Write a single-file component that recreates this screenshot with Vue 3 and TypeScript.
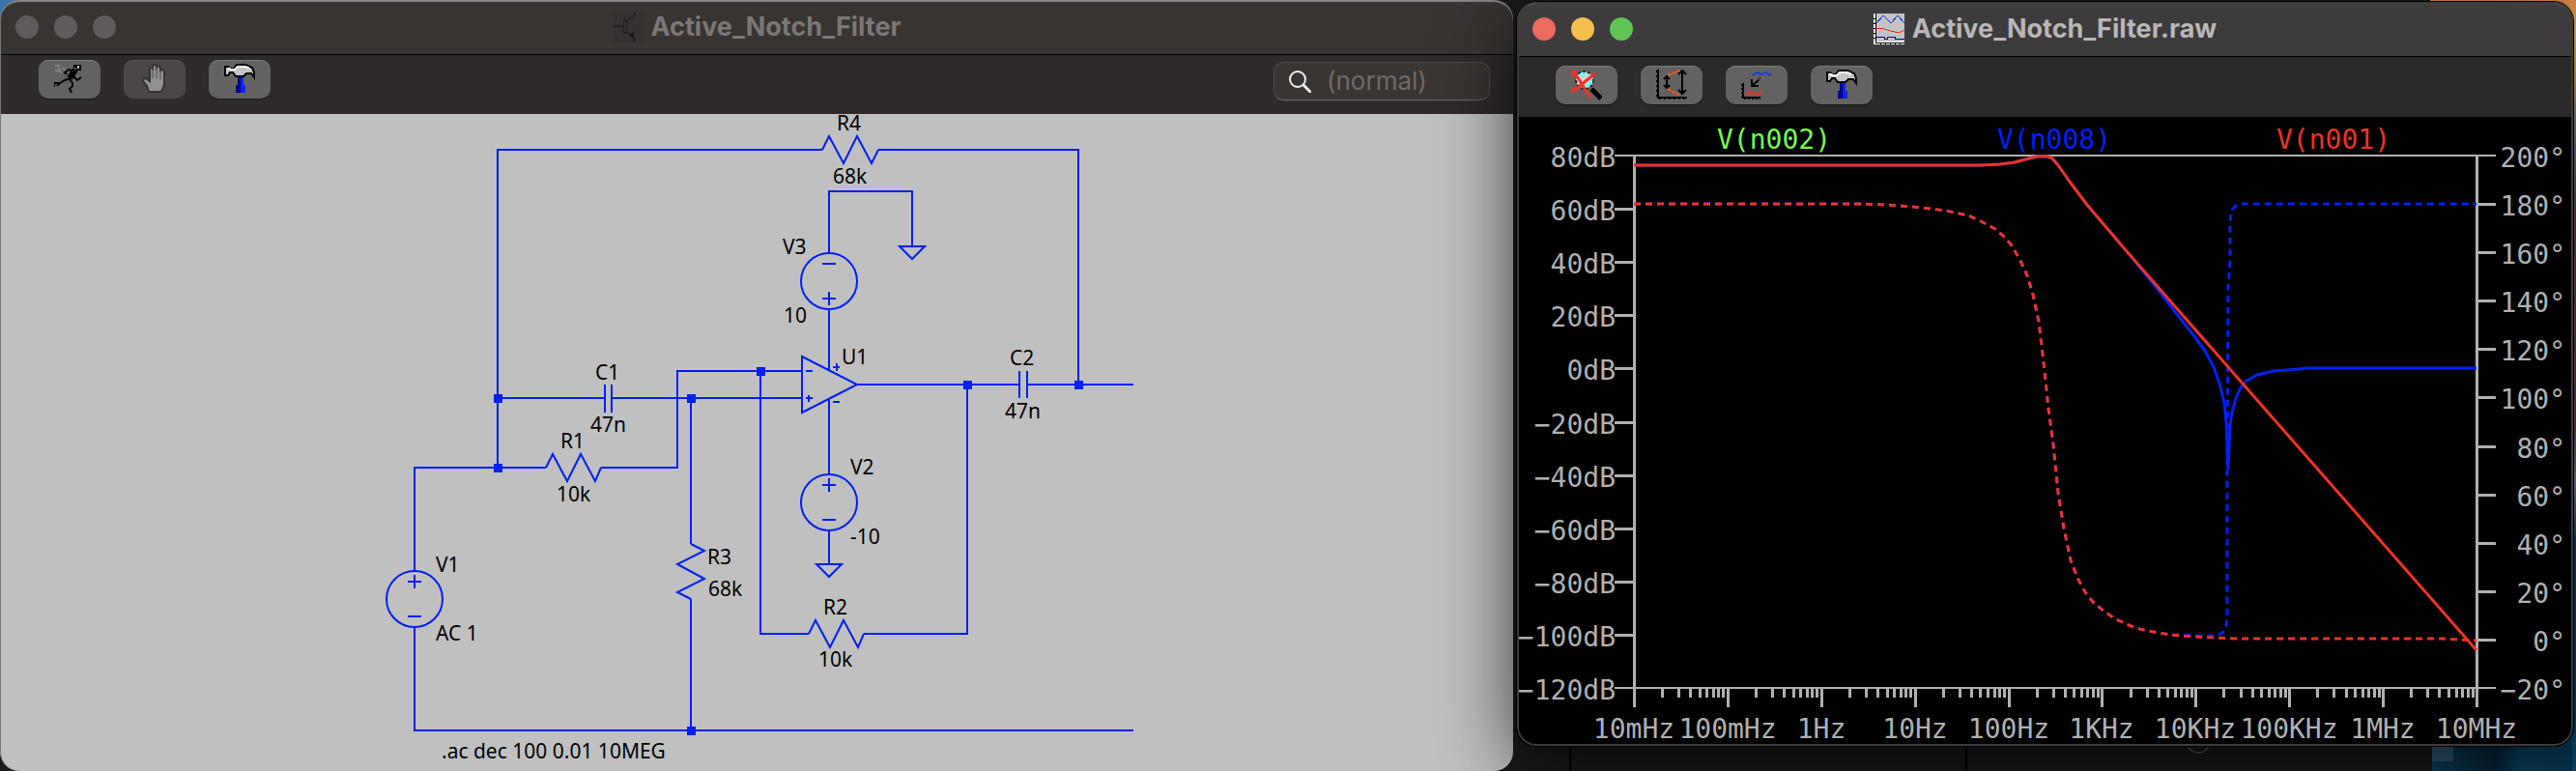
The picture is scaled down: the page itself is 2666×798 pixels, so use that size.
<script setup lang="ts">
type Point = [number, number]

interface Label {
  text: string
  x: number
  y: number
}

const labels: Label[] = [
  { text: 'R4', x: 866, y: 135 },
  { text: '68k', x: 862, y: 190 },
  { text: 'V3', x: 810, y: 263 },
  { text: '10', x: 811, y: 334 },
  { text: 'U1', x: 871, y: 377 },
  { text: 'C2', x: 1045, y: 378 },
  { text: '47n', x: 1040, y: 433 },
  { text: 'C1', x: 616, y: 393 },
  { text: '47n', x: 611, y: 447 },
  { text: 'R1', x: 580, y: 464 },
  { text: '10k', x: 576, y: 519 },
  { text: 'V1', x: 451, y: 592 },
  { text: 'AC 1', x: 451, y: 663 },
  { text: 'R3', x: 732, y: 584 },
  { text: '68k', x: 733, y: 617 },
  { text: 'V2', x: 880, y: 491 },
  { text: '-10', x: 880, y: 563 },
  { text: 'R2', x: 852, y: 636 },
  { text: '10k', x: 847, y: 690 },
  { text: '.ac dec 100 0.01 10MEG', x: 457, y: 785 },
]

const nodes: Point[] = [
  [515, 412], [515, 484], [715, 412], [715, 756], [787, 384], [1001, 398], [1116, 398],
]

const wires = [
  'M851 155H515V484',
  'M909 155H1116V398',
  'M515 412H626M633 412H830',
  'M429 591V484H565',
  'M622 484H701V384H830',
  'M715 412V563M715 620V756',
  'M429 649V756H1173',
  'M787 384V656H837',
  'M894 656H1001V398',
  'M887 398H1055M1063 398H1173',
  'M858 262V198H944V255',
  'M858 320V384M858 412V491M858 549V584',
].join('')

const parts = [
  'M851 155l7 -14 15 28 14 -28 15 28 7 -14',
  'M565 484l7 -14 15 28 14 -28 15 28 6 -14',
  'M837 656l7 -14 15 28 14 -28 15 28 6 -14',
  'M715 563l14 7 -28 14 28 15 -28 14 14 7',
  'M626 398V427M633 398V427',
  'M1055 384V412M1063 384V412',
  'M830 369V427L887 398Z',
  'M931 255H957L944 268Z',
  'M845 584H871L858 597Z',
  'M422 602H436M429 595V609M422 638H436',
  'M851 273H865M851 309H865M858 302V316',
  'M851 502H865M858 495V509M851 538H865',
  'M834 384H841M834 412H841M837 409V416',
  'M862 380H869M866 376V384M862 416H869',
].join('')

// Plot area edges
const left = 1691
const right = 2563
const top = 161
const bottom = 712

const dbTicks = Array.from({ length: 11 }, (_, i) => ({
  text: `${80 - i * 20}dB`.replace('-', '−'),
  y: Math.round(top + ((bottom - top) * i) / 10),
  edge: i === 0 || i === 10,
}))

const degTicks = Array.from({ length: 12 }, (_, i) => ({
  text: `${200 - i * 20}°`.replace('-', '−'),
  y: Math.round(top + ((bottom - top) * i) / 11),
  edge: i === 0 || i === 11,
}))

const decade = (right - left) / 9
const freqTicks = ['10mHz', '100mHz', '1Hz', '10Hz', '100Hz', '1KHz', '10KHz', '100KHz', '1MHz', '10MHz'].map(
  (text, i) => ({ text, x: Math.round(left + decade * i) }),
)
const minorTicks = Array.from({ length: 9 }, (_, d) =>
  [2, 3, 4, 5, 6, 7, 8, 9].map((n) => Math.round(left + decade * (d + Math.log10(n)))),
).flat()

const traces = [
  { text: 'V(n002)', x: 1836, cls: 'green' },
  { text: 'V(n008)', x: 2126, cls: 'blue' },
  { text: 'V(n001)', x: 2415, cls: 'red' },
]

const asPoints = (list: Point[]) => list.map((p) => p.join(',')).join(' ')

const gainShared: Point[] = [
  [1691, 171], [2048, 171], [2070, 170], [2085, 168], [2096, 165], [2108, 162], [2119, 162], [2124, 164],
  [2130, 171], [2142, 188], [2160, 212], [2200, 259],
]
const gainRed = asPoints([...gainShared, [2321, 397], [2563, 673]])
const gainBlue = asPoints([
  ...gainShared, [2218, 281], [2235, 302], [2252, 324], [2267, 343], [2282, 363], [2291, 380], [2297, 397],
  [2302, 417], [2304, 437], [2306, 485], [2308, 440], [2310, 427], [2314, 412], [2319, 401], [2325, 394],
  [2336, 388], [2353, 384], [2379, 382], [2388, 381], [2563, 381],
])

const phaseShared: Point[] = [
  [1691, 211], [1927, 211], [1953, 212], [1978, 214], [1998, 216], [2013, 218], [2037, 223], [2048, 228],
  [2065, 237], [2073, 244], [2082, 254], [2092, 272], [2098, 285], [2104, 305], [2110, 333], [2115, 375],
  [2120, 423], [2125, 460], [2130, 510], [2136, 547], [2143, 580], [2151, 600], [2158, 613], [2167, 624],
  [2178, 633], [2190, 641], [2210, 650], [2223, 653], [2246, 657],
]
const phaseRed = asPoints([...phaseShared, [2271, 659], [2313, 661], [2528, 661], [2563, 663]])
const phaseBlue = asPoints([
  ...phaseShared, [2271, 658], [2295, 658], [2301, 654], [2304, 648], [2305, 638], [2305, 480], [2306, 297],
  [2308, 270], [2308, 233], [2309, 218], [2314, 213], [2321, 211], [2563, 211],
])
</script>

<template>
  <main class="desktop">
    <section class="window schematic" aria-label="Schematic">
      <header class="titlebar">
        <div class="lights">
          <button type="button" aria-label="Close"></button>
          <button type="button" aria-label="Minimize"></button>
          <button type="button" aria-label="Zoom"></button>
        </div>
        <h1>
          <svg class="icon" viewBox="0 0 32 32" aria-hidden="true">
            <rect width="32" height="32" fill="#353130" />
            <path d="M0 15H11M15 10L23 3V0M15 21L23 28V31" fill="none" stroke="#161414" stroke-width="1" />
            <rect x="12" y="9" width="2" height="13" fill="#555" stroke="#111" />
            <path d="M17 25L22 21V28Z" fill="#161414" />
          </svg>
          <span>Active_Notch_Filter</span>
        </h1>
      </header>
      <div class="toolbar">
        <button type="button" class="tool" aria-label="Run">
          <svg class="icon" viewBox="0 0 32 32" aria-hidden="true">
            <g fill="none" stroke="#858282" stroke-width="2">
              <path d="M1 2H6M9 4L11 7M1 7H4L8 9M4 4L7 6" />
            </g>
            <path d="M20 1H28V7H23V4H20Z" fill="#000" />
            <rect x="24" y="2" width="2" height="3" fill="#bbb" />
            <path d="M22 6L16 15" stroke="#000" stroke-width="6" />
            <path
              d="M19 7L15 6L11 9L13 11M20 13L24 17L28 14M17 15L11 17L6 20H0V24M6 20L3 23M15 15L19 20V23L16 26L18 30"
              fill="none" stroke="#000" stroke-width="2"
            />
          </svg>
        </button>
        <button type="button" class="tool" aria-label="Halt" disabled>
          <svg class="icon" viewBox="0 0 32 32" aria-hidden="true">
            <path
              d="M10 29L8 23L4 18Q4 15 7 15L11 18V5Q12 3 14 5V2Q16 0 18 2V4Q20 1 22 4V7Q25 5 26 8V22L23 29Z"
              fill="#92908e" stroke="#363332" stroke-width="2"
            />
            <path d="M14 4V15M18 3V15M22 6V16" stroke="#4e4b4a" stroke-width="1" />
          </svg>
        </button>
        <button type="button" class="tool" aria-label="Control panel">
          <svg class="icon" viewBox="0 0 32 32" aria-hidden="true">
            <path d="M1 3H4L6 5H10L13 1H22L29 4L31 9V14L28 10H23L20 13H12L9 9H6L4 12H1Z" fill="#c4c4c4" stroke="#000" stroke-width="2" />
            <path d="M3 5H5L7 6H11L14 3H22L26 5" fill="none" stroke="#fff" stroke-width="2" />
            <path d="M14 14H17V22H18V30H12V22H14Z" fill="#00007e" />
            <path d="M17 14H20V22H22V30H17Z" fill="#0a20ff" />
          </svg>
        </button>
        <label class="search">
          <svg viewBox="0 0 24 24" aria-hidden="true">
            <circle cx="10" cy="10" r="8" fill="none" stroke="#eee" stroke-width="2" />
            <path d="M16 16L23 23" stroke="#eee" stroke-width="3" stroke-linecap="round" />
          </svg>
          <input type="text" placeholder="(normal)" aria-label="Simulation mode" />
        </label>
      </div>
      <svg class="canvas" viewBox="0 118 1566 680" role="img" aria-label="Active notch filter circuit">
        <g class="circuit">
          <path :d="wires" />
          <path :d="parts" />
          <circle cx="429" cy="620" r="29" />
          <circle cx="858" cy="291" r="29" />
          <circle cx="858" cy="520" r="29" />
        </g>
        <rect v-for="(n, i) in nodes" :key="i" :x="n[0] - 4" :y="n[1] - 4" width="9" height="9" fill="#0020f5" />
        <text v-for="(l, i) in labels" :key="i" :x="l.x" :y="l.y" class="part">{{ l.text }}</text>
      </svg>
    </section>

    <section class="window waveform" aria-label="Waveform">
      <header class="titlebar">
        <div class="lights">
          <button type="button" class="close" aria-label="Close"></button>
          <button type="button" class="min" aria-label="Minimize"></button>
          <button type="button" class="zoom" aria-label="Zoom"></button>
        </div>
        <h1>
          <svg class="icon" viewBox="0 0 32 32" shape-rendering="crispEdges" aria-hidden="true">
            <rect width="32" height="32" fill="#fff" />
            <rect x="3" width="29" height="29" fill="#c4c4c4" />
            <path d="M2 0V30M2 30H32" fill="none" stroke="#000" />
            <path d="M0 5H2M0 10H2M0 15H2M0 20H2M0 25H2M7 30V32M12 30V32M17 30V32M22 30V32M27 30V32" stroke="#000" />
            <path d="M3 10L10 2L18 10L25 2L32 10" fill="none" stroke="#1438e8" />
            <path d="M3 16L7 15L18 18L26 20L32 17" fill="none" stroke="#e83020" />
            <path d="M3 24H11V26H14V24H22V26H32" fill="none" stroke="#000c90" />
          </svg>
          <span>Active_Notch_Filter.raw</span>
        </h1>
      </header>
      <div class="toolbar">
        <button type="button" class="tool" aria-label="Zoom to fit">
          <svg class="icon" viewBox="0 0 32 32" aria-hidden="true">
            <path d="M21 20L31 30" stroke="#000" stroke-width="5" />
            <circle cx="14" cy="11" r="9" fill="#cfd4d4" stroke="#222" stroke-width="2" stroke-dasharray="3 2" />
            <path d="M9 6Q12 3 15 5M15 17Q20 16 21 11" fill="none" stroke="#6ff" stroke-width="3" />
            <path d="M1 2L8 10L14 20L20 29M25 4L15 12L8 18L1 23M1 8V2H7M1 18L3 24" fill="none" stroke="#ee3224" stroke-width="3" />
          </svg>
        </button>
        <button type="button" class="tool" aria-label="Autorange Y axis">
          <svg class="icon" viewBox="0 0 32 32" aria-hidden="true">
            <path d="M2 0V29H32" fill="none" stroke="#000" stroke-width="2" />
            <path d="M1 1V29M3 30H32" fill="none" stroke="#000" stroke-width="2" stroke-dasharray="2 3" />
            <path d="M12 6L26 0M12 20L25 27" stroke="#f05a28" stroke-width="2" stroke-dasharray="4 1" />
            <path d="M11 7V19M8 10L11 7L14 10M8 16L11 19L14 16M27 1V25M23 5L27 1L31 5M23 21L27 25L31 21" fill="none" stroke="#000" stroke-width="2" />
          </svg>
        </button>
        <button type="button" class="tool" aria-label="Add trace">
          <svg class="icon" viewBox="0 0 32 32" aria-hidden="true">
            <path d="M12 6L16 3L21 5L26 3L29 6L32 4" fill="none" stroke="#1c3cd8" stroke-width="2" />
            <path d="M20 8L17 12" stroke="#702020" stroke-width="2" />
            <path d="M18 11L12 16M11 10V17H18" fill="none" stroke="#000" stroke-width="2" />
            <path d="M2 14V29H20" fill="none" stroke="#000" stroke-width="2" />
            <path d="M1 15V29M3 30H20" fill="none" stroke="#000" stroke-width="2" stroke-dasharray="2 2" />
            <path d="M4 26L8 23L12 25L17 25L21 23" fill="none" stroke="#ee3224" stroke-width="2" />
          </svg>
        </button>
        <button type="button" class="tool" aria-label="Control panel">
          <svg class="icon" viewBox="0 0 32 32" aria-hidden="true">
            <path d="M1 3H4L6 5H10L13 1H22L29 4L31 9V14L28 10H23L20 13H12L9 9H6L4 12H1Z" fill="#c4c4c4" stroke="#000" stroke-width="2" />
            <path d="M3 5H5L7 6H11L14 3H22L26 5" fill="none" stroke="#fff" stroke-width="2" />
            <path d="M14 14H17V22H18V30H12V22H14Z" fill="#00007e" />
            <path d="M17 14H20V22H22V30H17Z" fill="#0a20ff" />
          </svg>
        </button>
      </div>
      <svg class="canvas" viewBox="1570 121 1093 651" role="img" aria-label="Frequency response plot">
        <g class="axis">
          <path :d="`M${left - 20} ${top}H${right + 20}M${left - 20} ${bottom}H${right + 20}`" stroke-width="2" />
          <path :d="`M${left} ${top}V${bottom + 20}M${right} ${top}V${bottom + 20}`" stroke-width="3" />
          <template v-for="t in dbTicks" :key="t.text">
            <path v-if="!t.edge" :d="`M${left - 20} ${t.y}H${left}`" stroke-width="3" />
          </template>
          <template v-for="t in degTicks" :key="t.text">
            <path v-if="!t.edge" :d="`M${right} ${t.y}H${right + 20}`" stroke-width="3" />
          </template>
          <path v-for="t in freqTicks" :key="t.text" :d="`M${t.x} ${bottom}v20`" stroke-width="3" />
          <path v-for="x in minorTicks" :key="x" :d="`M${x} ${bottom}v10`" stroke-width="3" />
        </g>
        <g class="trace">
          <polyline class="blue dashed" :points="phaseBlue" />
          <polyline class="blue" :points="gainBlue" />
          <polyline class="red dashed" :points="phaseRed" />
          <polyline class="red" :points="gainRed" />
        </g>
        <g class="tick end">
          <text v-for="t in dbTicks" :key="t.text" x="1672" :y="t.y + 12">{{ t.text }}</text>
          <text v-for="t in degTicks" :key="t.text" x="2655" :y="t.y + 12">{{ t.text }}</text>
        </g>
        <g class="tick mid">
          <text v-for="t in freqTicks" :key="t.text" :x="t.x" y="764">{{ t.text }}</text>
          <text v-for="t in traces" :key="t.text" :class="t.cls" :x="t.x" y="154">{{ t.text }}</text>
        </g>
      </svg>
    </section>
  </main>
</template>

<style>
body {
  background: #1a1818;
}
</style>

<style scoped>
.desktop {
  display: grid;
  grid-template-columns: 1566fr 1093fr;
  gap: 4px;
  align-items: start;
  min-height: 100vh;
  padding-right: 3px;
  box-sizing: border-box;
  overflow: hidden;
  font-family: Inter, "Liberation Sans", sans-serif;
  background:
    linear-gradient(#3b74ad, #3b74ad) 0 0 / 20px 20px no-repeat,
    linear-gradient(#e8884a, #f0b850) 100% 0 / 151px 30px no-repeat,
    linear-gradient(#f0bc4e 0 80px, #8c7f98 140px, #6e4256 220px, #6e4256 440px, #8c88a8 500px, #0b4a6e 560px) 100% 0 / 4px 100% no-repeat,
    linear-gradient(#33607c, #33607c) calc(100% - 127px) 768px / 22px 20px no-repeat,
    linear-gradient(90deg, #0d4768, #06263c 45%, #0d4768 60%, #083550) 100% 760px / 149px 40px no-repeat,
    linear-gradient(#000, #000) 1624px 760px / 2px 40px no-repeat,
    linear-gradient(#000, #000) 2034px 760px / 2px 40px no-repeat,
    radial-gradient(circle 13px at 2275px 767px, transparent 11px, #777 12px, transparent 13px),
    linear-gradient(#1c1b1b, #1c1919);
}

.window {
  position: relative;
  min-width: 0;
  overflow: hidden;
  border-radius: 20px;
}

.window::after {
  content: "";
  position: absolute;
  inset: 0;
  border-radius: inherit;
  pointer-events: none;
}

.schematic {
  background: #c0c0c0;
}

.schematic::after {
  box-shadow: inset 0 2px 1px #8a8887, inset 1px 0 0 #777;
}

.waveform {
  margin-top: 2px;
  background: #000;
  box-shadow: 0 0 0 1px #000, 0 20px 80px rgba(0, 0, 0, 0.75);
}

.waveform::after {
  box-shadow: inset 0 0 0 2px #3b3b3b, inset 0 2px 1px #858383;
}

.titlebar {
  display: grid;
  grid-template-columns: 1fr auto 1fr;
  align-items: center;
  height: 56px;
  padding: 0 16px;
  border-bottom: 1px solid #000;
}

.schematic .titlebar {
  background: #383432;
}

.waveform .titlebar {
  background: #3d3b3c;
}

.lights {
  display: flex;
  gap: 16px;
}

.lights button {
  width: 24px;
  height: 24px;
  padding: 0;
  border: 0;
  border-radius: 50%;
  background: #5e5b5a;
}

.lights .close {
  background: #ed6a5e;
}

.lights .min {
  background: #f5bf4f;
}

.lights .zoom {
  background: #61c554;
}

h1 {
  display: flex;
  align-items: center;
  gap: 8px;
  margin: 0;
  font-size: 27px;
  line-height: 32px;
  font-weight: 700;
  color: #7b7776;
}

.waveform h1 {
  color: #b9b7b7;
}

.icon {
  display: block;
  width: 32px;
  height: 32px;
}

.toolbar {
  display: flex;
  align-items: flex-start;
  gap: 24px;
  box-sizing: border-box;
  padding: 5px 24px 0 40px;
  height: 61px;
  background: #2f2b2a;
}

.waveform .toolbar {
  height: 62px;
  padding-top: 9px;
  background: #2b292a;
}

.tool {
  display: flex;
  align-items: center;
  justify-content: center;
  width: 64px;
  height: 40px;
  padding: 0;
  border: 0;
  border-radius: 10px;
  background: #646161;
  box-shadow: inset 0 1px 0 #7d7a7a, 0 1px 1px #1a1818;
}

.tool:disabled {
  background: #4a4746;
  box-shadow: inset 0 1px 0 #595655;
}

.search {
  display: flex;
  align-items: center;
  gap: 16px;
  box-sizing: border-box;
  width: 224px;
  height: 40px;
  margin: 2px 0 0 auto;
  padding: 0 14px;
  border: 1px solid #4d4948;
  border-bottom-color: #6a6665;
  border-radius: 10px;
  background: #393533;
}

.search svg {
  flex: none;
  width: 24px;
  height: 24px;
}

.search input {
  min-width: 0;
  flex: 1;
  padding: 0;
  border: 0;
  outline: 0;
  background: none;
  color: #d0cccb;
  font: 400 26px/32px Inter, "Liberation Sans", sans-serif;
}

.search input::placeholder {
  color: #6f6b69;
  opacity: 1;
}

.canvas {
  display: block;
  width: 100%;
  height: auto;
  overflow: visible;
}

.circuit {
  fill: none;
  stroke: #0020f5;
  stroke-width: 2px;
}

.part {
  font: 400 21px "Noto Sans", "Open Sans", sans-serif;
  fill: #000;
}

.axis {
  fill: none;
  stroke: #b0b0b0;
  shape-rendering: crispEdges;
}

.trace {
  fill: none;
  stroke-width: 3px;
  stroke-linejoin: round;
}

.trace .blue {
  stroke: #0020f5;
}

.trace .red {
  stroke: #ee3224;
}

.dashed {
  stroke-dasharray: 7 5;
}

.tick {
  font: 400 28px "DejaVu Sans Mono", monospace;
  fill: #b0b0b0;
}

.end {
  text-anchor: end;
}

.mid {
  text-anchor: middle;
}

.tick .green {
  fill: #75fb4c;
}

.tick .blue {
  fill: #0020f5;
}

.tick .red {
  fill: #ee3224;
}
</style>
